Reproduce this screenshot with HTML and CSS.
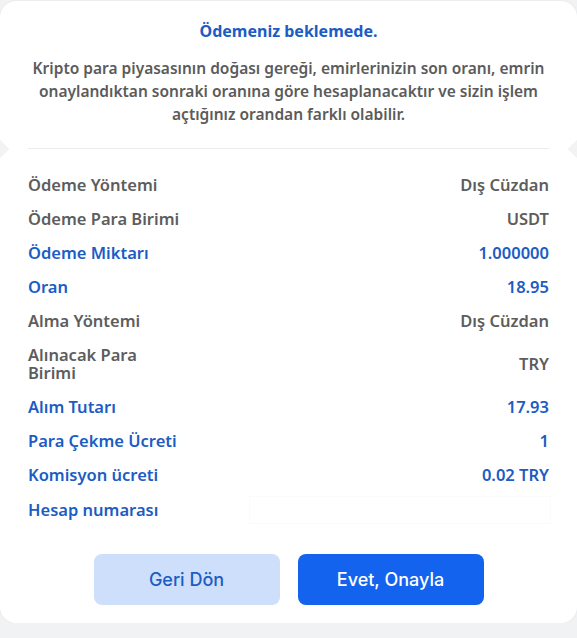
FILE: index.html
```html
<!DOCTYPE html>
<html>
<head>
    <meta charset="utf-8">
    <meta name="viewport" content="width=device-width, initial-scale=1">
    <title>Ödeme Onayı</title>
    <link rel="stylesheet" href="styles.css">
</head>

<body>
    <div class="modal">
        <span class="side-arrow left"></span>
        <span class="side-arrow right"></span>

        <h2 class="modal-title">Ödemeniz beklemede.</h2>
        <p class="modal-note">Kripto para piyasasının doğası gereği, emirlerinizin son oranı, emrin onaylandıktan sonraki oranına göre hesaplanacaktır ve sizin işlem açtığınız orandan farklı olabilir.</p>

        <div class="summary">
            <div class="summary-row">
                <span class="label">Ödeme Yöntemi</span>
                <span class="value">Dış Cüzdan</span>
            </div>
            <div class="summary-row">
                <span class="label">Ödeme Para Birimi</span>
                <span class="value">USDT</span>
            </div>
            <div class="summary-row highlight">
                <span class="label">Ödeme Miktarı</span>
                <span class="value">1.000000</span>
            </div>
            <div class="summary-row highlight">
                <span class="label">Oran</span>
                <span class="value">18.95</span>
            </div>
            <div class="summary-row">
                <span class="label">Alma Yöntemi</span>
                <span class="value">Dış Cüzdan</span>
            </div>
            <div class="summary-row">
                <span class="label">Alınacak Para Birimi</span>
                <span class="value">TRY</span>
            </div>
            <div class="summary-row highlight">
                <span class="label">Alım Tutarı</span>
                <span class="value">17.93</span>
            </div>
            <div class="summary-row highlight">
                <span class="label">Para Çekme Ücreti</span>
                <span class="value">1</span>
            </div>
            <div class="summary-row highlight">
                <span class="label">Komisyon ücreti</span>
                <span class="value">0.02 TRY</span>
            </div>
            <div class="summary-row highlight">
                <span class="label">Hesap numarası</span>
                <span class="value account"></span>
            </div>
        </div>

        <div class="modal-actions">
            <button type="button" class="back-btn">Geri Dön</button>
            <button type="button" class="confirm-btn">Evet, Onayla</button>
        </div>
    </div>
</body>
</html>
```

FILE: styles.css
```css
/* Payment confirmation modal */
body {
    font-family: "Noto Sans", "Open Sans", sans-serif;
    margin: 0;
    padding: 0;
    background-color: #f1f2f4;
}
.modal {
    position: relative;
    background-color: #fff;
    border-radius: 16px;
    margin-top: 1px;
    padding: 18px 28px 16px;
    height: 588px;
    box-shadow: 0 0 2px rgba(0, 0, 0, 0.08);
}
.side-arrow {
    position: absolute;
    top: 140px;
    width: 16px;
    height: 16px;
    background-color: #f3f3f3;
    transform: rotate(45deg);
}
.side-arrow.left {
    left: -10px;
}
.side-arrow.right {
    right: -10px;
}
.modal-title {
    margin: 0;
    text-align: center;
    font-size: 16px;
    line-height: 24px;
    font-weight: 700;
    color: #1c5cc4;
}
.modal-note {
    margin: 14px 0 0;
    padding: 0 0 22px;
    text-align: center;
    font-size: 15.5px;
    line-height: 23px;
    font-weight: 600;
    color: #5b5b5b;
    border-bottom: 1px solid #ececec;
}
.summary {
    margin-top: 19px;
}
.summary-row {
    display: flex;
    align-items: center;
    justify-content: space-between;
    padding: 8px 0;
    font-size: 16.5px;
    line-height: 18px;
    font-weight: 600;
    color: #5d5d5d;
}
.summary-row.highlight {
    color: #1c5cc4;
}
.summary-row .label {
    max-width: 156px;
}
.summary-row .value {
    text-align: right;
}
.summary-row .value.account {
    width: 300px;
    height: 26px;
    margin: -4px -2px;
    border: 1px solid #fbfbfb;
}
.modal-actions {
    display: flex;
    justify-content: center;
    gap: 18px;
    margin-top: 26px;
}
.modal-actions button {
    width: 186px;
    height: 51px;
    border: none;
    border-radius: 8px;
    font-family: "Inter", sans-serif;
    font-size: 18px;
    font-weight: 500;
    cursor: pointer;
}
.back-btn {
    background-color: #cddffa;
    color: #1c5cc4;
}
.confirm-btn {
    background-color: #1463ee;
    color: #fff;
}
```
